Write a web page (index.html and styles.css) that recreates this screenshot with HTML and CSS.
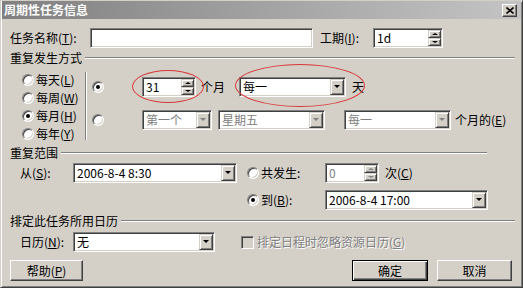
FILE: index.html
```html
<!DOCTYPE html>
<html lang="zh-CN">
<head>
  <meta charset="UTF-8">
  <title>周期性任务信息</title>
  <link rel="stylesheet" href="styles.css">
</head>
<body>

  <div class="window">
    <div class="titlebar">
      <span class="title">周期性任务信息</span>
      <span class="close">
        <svg width="8" height="7" viewBox="0 0 8 7"><path d="M0.5 0.5 L7.5 6.5 M7.5 0.5 L0.5 6.5" stroke="#000" stroke-width="1.6" fill="none"/></svg>
      </span>
    </div>

    <div class="row-name">
      <label class="lbl-name">任务名称(<u>T</u>):</label>
      <div class="edit edit-name"></div>
      <label class="lbl-dur">工期(<u>I</u>):</label>
      <div class="edit spin spin-dur">
        <span class="val">1d</span>
        <span class="spinbtns"><span class="sb up"></span><span class="sb down"></span></span>
      </div>
    </div>

    <div class="group-head"><span>重复发生方式</span><i class="etch"></i></div>
    <div class="recur">
      <div class="freq">
        <div class="opt"><span class="radio"></span>每天(<u>L</u>)</div>
        <div class="opt"><span class="radio"></span>每周(<u>W</u>)</div>
        <div class="opt"><span class="radio on"></span>每月(<u>H</u>)</div>
        <div class="opt"><span class="radio"></span>每年(<u>Y</u>)</div>
      </div>
      <div class="vsep"></div>
      <div class="monthly">
        <div class="mrow mrow-a">
          <span class="radio on"></span>
          <div class="edit spin w54 ml38">
            <span class="val">31</span>
            <span class="spinbtns"><span class="sb up"></span><span class="sb down"></span></span>
          </div>
          <span class="ml5">个月</span>
          <div class="edit combo w107 ml14"><span class="val">每一</span><span class="dd"></span></div>
          <span class="ml6">天</span>
        </div>
        <div class="mrow mrow-b">
          <span class="radio"></span>
          <div class="edit combo dis w70 ml38"><span class="val">第一个</span><span class="dd"></span></div>
          <div class="edit combo dis w107 ml6"><span class="val">星期五</span><span class="dd"></span></div>
          <div class="edit combo dis w107 ml19"><span class="val">每一</span><span class="dd"></span></div>
          <span class="ml4">个月的(<u>E</u>)</span>
        </div>
      </div>
    </div>

    <div class="group-head short"><span>重复范围</span><i class="etch"></i></div>
    <div class="range">
      <div class="from">
        <label class="lbl">从(<u>S</u>):</label>
        <div class="edit combo w164"><span class="val">2006-8-4 8:30</span><span class="dd"></span></div>
      </div>
      <div class="ends">
        <div class="erow">
          <span class="radio"></span>
          <label class="elbl">共发生:</label>
          <div class="edit spin dis w54">
            <span class="val">0</span>
            <span class="spinbtns"><span class="sb up"></span><span class="sb down"></span></span>
          </div>
          <span class="ml6">次(<u>C</u>)</span>
        </div>
        <div class="erow erow-b">
          <span class="radio on"></span>
          <label class="elbl">到(<u>B</u>):</label>
          <div class="edit combo w163"><span class="val">2006-8-4 17:00</span><span class="dd"></span></div>
        </div>
      </div>
    </div>

    <div class="group-head cal-head"><span>排定此任务所用日历</span><i class="etch"></i></div>
    <div class="cal">
      <label class="lbl">日历(<u>N</u>):</label>
      <div class="edit combo w142"><span class="val">无</span><span class="dd"></span></div>
      <span class="check"></span>
      <span class="disabled-text">排定日程时忽略资源日历(<u>G</u>)</span>
    </div>

    <div class="buttons">
      <button class="btn btn-help">帮助(<u>P</u>)</button>
      <button class="btn btn-ok">确定</button>
      <button class="btn btn-cancel">取消</button>
    </div>

    <div class="ellipse e1"></div>
    <div class="ellipse e2"></div>
  </div>

</body>
</html>
```

FILE: styles.css
```css
* {
  box-sizing: border-box;
}
body {
  margin: 0;
  font-family: "Noto Sans CJK SC", "Noto Sans", sans-serif;
  font-size: 12px;
  line-height: 16px;
  color: #000;
}
u {
  text-decoration: underline;
  text-underline-offset: 1px;
}
.window {
  position: relative;
  width: 523px;
  height: 288px;
  background-color: #d4d0c8;
  border: 1px solid;
  border-color: #d4d0c8 #404040 #404040 #d4d0c8;
  box-shadow: inset 1px 1px #fff, inset -1px -1px #808080;
  padding: 0 1px;
}
.titlebar {
  height: 18px;
  display: flex;
  align-items: center;
  justify-content: space-between;
  padding: 0 4px 0 2px;
  background: linear-gradient(to right, #808080, #c4c4c4);
  color: #fff;
  font-weight: bold;
}
.close {
  width: 15px;
  height: 13px;
  display: flex;
  align-items: center;
  justify-content: center;
  background-color: #d4d0c8;
  border: 1px solid;
  border-color: #fff #404040 #404040 #fff;
  box-shadow: inset -1px -1px #808080;
}

/* controls */
.edit {
  height: 20px;
  display: flex;
  align-items: center;
  background-color: #fff;
  border: 1px solid;
  border-color: #808080 #fff #fff #808080;
  box-shadow: inset 1px 1px #404040, inset -1px -1px #d4d0c8;
  padding: 1px;
}
.edit .val {
  flex: 1;
  padding-left: 2px;
  white-space: nowrap;
}
.edit.dis .val {
  color: #808080;
}
.spinbtns {
  display: flex;
  flex-direction: column;
  width: 13px;
  height: 16px;
}
.sb, .dd {
  position: relative;
  flex: none;
  background-color: #d4d0c8;
  border: 1px solid;
  border-color: #d4d0c8 #404040 #404040 #d4d0c8;
  box-shadow: inset 1px 1px #fff, inset -1px -1px #808080;
}
.sb {
  flex: 1;
}
.sb::after, .dd::after {
  content: "";
  position: absolute;
  left: 50%;
  top: 50%;
  width: 0;
  height: 0;
}
.sb.up::after {
  margin: -1px 0 0 -3px;
  border-left: 3px solid transparent;
  border-right: 3px solid transparent;
  border-bottom: 2px solid #000;
}
.sb.down::after {
  margin: -1px 0 0 -3px;
  border-left: 3px solid transparent;
  border-right: 3px solid transparent;
  border-top: 2px solid #000;
}
.dd {
  width: 14px;
  height: 16px;
}
.dd::after {
  margin: -2px 0 0 -3px;
  border-left: 3px solid transparent;
  border-right: 3px solid transparent;
  border-top: 3px solid #000;
}
.dis .sb.up::after {
  border-bottom-color: #808080;
}
.dis .sb.down::after,
.dis .dd::after {
  border-top-color: #808080;
}
.radio {
  position: relative;
  flex: none;
  width: 12px;
  height: 12px;
  border-radius: 50%;
  background-color: #fff;
  border: 1px solid;
  border-color: #808080 #fff #fff #808080;
  box-shadow: inset 1px 1px #404040, inset -1px -1px #d4d0c8;
}
.radio.on::after {
  content: "";
  position: absolute;
  left: 3px;
  top: 3px;
  width: 4px;
  height: 4px;
  border-radius: 50%;
  background-color: #000;
}
.check {
  flex: none;
  width: 13px;
  height: 13px;
  background-color: #d4d0c8;
  border: 1px solid;
  border-color: #808080 #fff #fff #808080;
  box-shadow: inset 1px 1px #404040, inset -1px -1px #d4d0c8;
  margin-left: 26px;
}
.disabled-text {
  margin-left: 3px;
  color: #808080;
  text-shadow: 1px 1px #fff;
}

.w54 { width: 54px; }
.w70 { width: 70px; }
.w107 { width: 107px; }
.w142 { width: 142px; }
.w163 { width: 163px; }
.w164 { width: 164px; }
.ml4 { margin-left: 4px; }
.ml5 { margin-left: 5px; }
.ml6 { margin-left: 6px; }
.ml14 { margin-left: 14px; }
.ml19 { margin-left: 19px; }
.ml38 { margin-left: 38px; }

/* task name row */
.row-name {
  display: flex;
  align-items: center;
  height: 20px;
  margin-top: 9px;
  padding-left: 8px;
}
.lbl-name {
  width: 80px;
}
.edit-name {
  width: 223px;
}
.lbl-dur {
  width: 53px;
  margin-left: 7px;
}
.spin-dur {
  width: 70px;
}

/* group headers */
.group-head {
  display: flex;
  align-items: center;
  height: 12px;
  margin: 4px 6px 0 8px;
}
.group-head .etch {
  flex: 1;
  height: 2px;
  margin-left: 3px;
  border-top: 1px solid #808080;
  border-bottom: 1px solid #fff;
}
.group-head.short {
  margin-right: 34px;
}
.cal-head {
  margin-top: 5px;
}

/* recurrence pattern */
.recur {
  display: flex;
  height: 79px;
  padding-left: 20px;
}
.freq {
  width: 63px;
  padding-top: 7px;
}
.opt {
  display: flex;
  align-items: center;
  height: 18px;
}
.opt .radio {
  margin-right: 2px;
}
.vsep {
  width: 2px;
  height: 68px;
  margin-top: 8px;
  border-left: 1px solid #808080;
  border-right: 1px solid #fff;
}
.monthly {
  margin-left: 5px;
}
.mrow {
  display: flex;
  align-items: center;
  height: 20px;
  margin-top: 13px;
}

/* range */
.range {
  display: flex;
  margin-top: 4px;
  padding-left: 18px;
}
.from {
  display: flex;
  align-items: center;
  height: 20px;
}
.lbl {
  width: 53px;
}
.ends {
  margin-left: 10px;
}
.erow {
  display: flex;
  align-items: center;
  height: 20px;
}
.erow-b {
  margin-top: 7px;
}
.elbl {
  width: 66px;
  padding-left: 2px;
}

/* calendar */
.cal {
  display: flex;
  align-items: center;
  height: 20px;
  margin-top: 5px;
  padding-left: 18px;
}

/* buttons */
.buttons {
  display: flex;
  margin-top: 8px;
  padding: 0 9px 0 8px;
}
.btn {
  height: 21px;
  padding: 0;
  font: inherit;
  color: #000;
  background-color: #d4d0c8;
  border: 1px solid;
  border-color: #fff #404040 #404040 #fff;
  box-shadow: inset -1px -1px #808080;
}
.btn-help {
  width: 73px;
}
.btn-ok {
  width: 76px;
  margin-left: auto;
  border-color: #000;
  box-shadow: inset 1px 1px #fff, inset -1px -1px #404040, inset -2px -2px #808080;
}
.btn-cancel {
  width: 75px;
  margin-left: 9px;
}

/* hand-drawn marks over the dialog */
.ellipse {
  position: absolute;
  border: 1px solid #d83838;
  border-radius: 50%;
}
.e1 {
  left: 131px;
  top: 69px;
  width: 72px;
  height: 33px;
}
.e2 {
  left: 234px;
  top: 63px;
  width: 130px;
  height: 43px;
}
```
